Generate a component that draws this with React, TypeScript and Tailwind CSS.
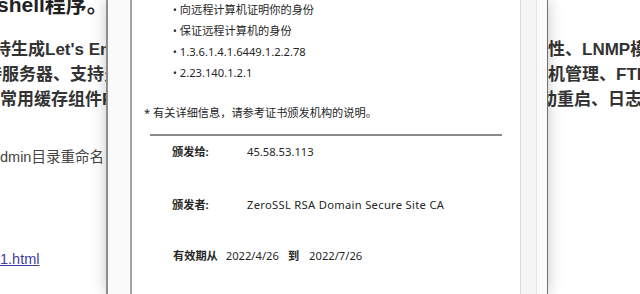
import React from 'react';

const pageFont = { fontFamily: '"Liberation Sans", "Noto Sans CJK SC", sans-serif' };
const dialogFont = { fontFamily: '"Noto Sans", "Noto Sans CJK SC", sans-serif' };

const bullets = ['向远程计算机证明你的身份', '保证远程计算机的身份', '1.3.6.1.4.1.6449.1.2.2.78', '2.23.140.1.2.1'];

function PageLine({ left, right, leftShift = '', rightShift = '' }: { left: string; right: string; leftShift?: string; rightShift?: string }) {
  return (
    <div className="flex h-[25px] items-center whitespace-nowrap">
      <div className="w-[548px] shrink-0 overflow-hidden">
        <span className={`block ${leftShift}`}>{left}</span>
      </div>
      <div className="overflow-hidden">
        <span className={`block ${rightShift}`}>{right}</span>
      </div>
    </div>
  );
}

function CertDialog() {
  return (
    <div
      className="absolute top-0 bottom-0 left-[106px] flex w-[442px] border-l-2 border-r border-l-[#8e8e8e] border-r-[#6f6f6f] bg-[#f7f7f7] shadow-[0_0_14px_rgba(0,0,0,0.22)]"
      style={dialogFont}
    >
      <div className="w-[22px] shrink-0 bg-[#fafafa]" />
      {/* cert info box */}
      <div className="flex w-[391px] shrink-0 flex-col border-l-2 border-r border-l-[#a3a3a3] border-r-[#dcdcdc] bg-white text-[11.2px] text-[#262626]">
        <ul className="flex flex-col">
          {bullets.map((b) => (
            <li key={b} className="flex h-[21px] items-center pl-[41px]">
              <span className="mr-[3px] text-[10px]">•</span>
              {b}
            </li>
          ))}
        </ul>
        <p className="mt-[18px] h-[21px] pl-[12px] leading-[21px]">* 有关详细信息，请参考证书颁发机构的说明。</p>
        <div className="mt-[11px] ml-[18px] h-[2px] w-[352px] bg-[#8a8a8a]" />
        <div className="mt-[6px] flex h-[21px] items-center pl-[40px]">
          <span className="w-[75px] font-bold">颁发给:</span>
          <span>45.58.53.113</span>
        </div>
        <div className="mt-[32px] flex h-[21px] items-center pl-[40px]">
          <span className="w-[75px] font-bold">颁发者:</span>
          <span className="tracking-[0.3px]">ZeroSSL RSA Domain Secure Site CA</span>
        </div>
        <div className="mt-[30px] flex h-[21px] items-center pl-[41px]">
          <span className="mr-[8px] font-bold">有效期从</span>
          <span>2022/4/26</span>
          <span className="mx-[9px] font-bold">到</span>
          <span className="ml-[1px]">2022/7/26</span>
        </div>
      </div>
      <div className="flex flex-1">
        <div className="w-[16px] border-r border-r-[#e6e6e6] bg-[#f5f5f5]" />
        <div className="flex-1 bg-[#fbfbfb]" />
      </div>
    </div>
  );
}

export default function App() {
  return (
    <div className="relative h-[294px] w-[640px] overflow-hidden bg-white" style={pageFont}>
      <div className="flex flex-col">
        <h1 className="-mt-[8px] -ml-[3px] h-[26px] whitespace-nowrap text-[21px] font-bold leading-[26px] text-[#222]">
          shell程序。
        </h1>
        <div className="mt-[19px] text-[17px] font-bold text-[#333]">
          <PageLine left="持生成Let's Encrypt证书，" right="性、LNMP模式" leftShift="-ml-[6px]" />
          <PageLine left="持服务器、支持多用户" right="机管理、FTP" leftShift="-ml-[15px]" />
          <PageLine left="常用缓存组件Redis" right="动重启、日志" rightShift="-ml-[8px]" />
        </div>
        <p className="mt-[35px] whitespace-nowrap text-[14.5px] text-[#444]">dmin目录重命名</p>
        <a className="mt-[80px] w-fit text-[14.5px] text-[#3d3d9e] underline">1.html</a>
      </div>
      <CertDialog />
    </div>
  );
}
